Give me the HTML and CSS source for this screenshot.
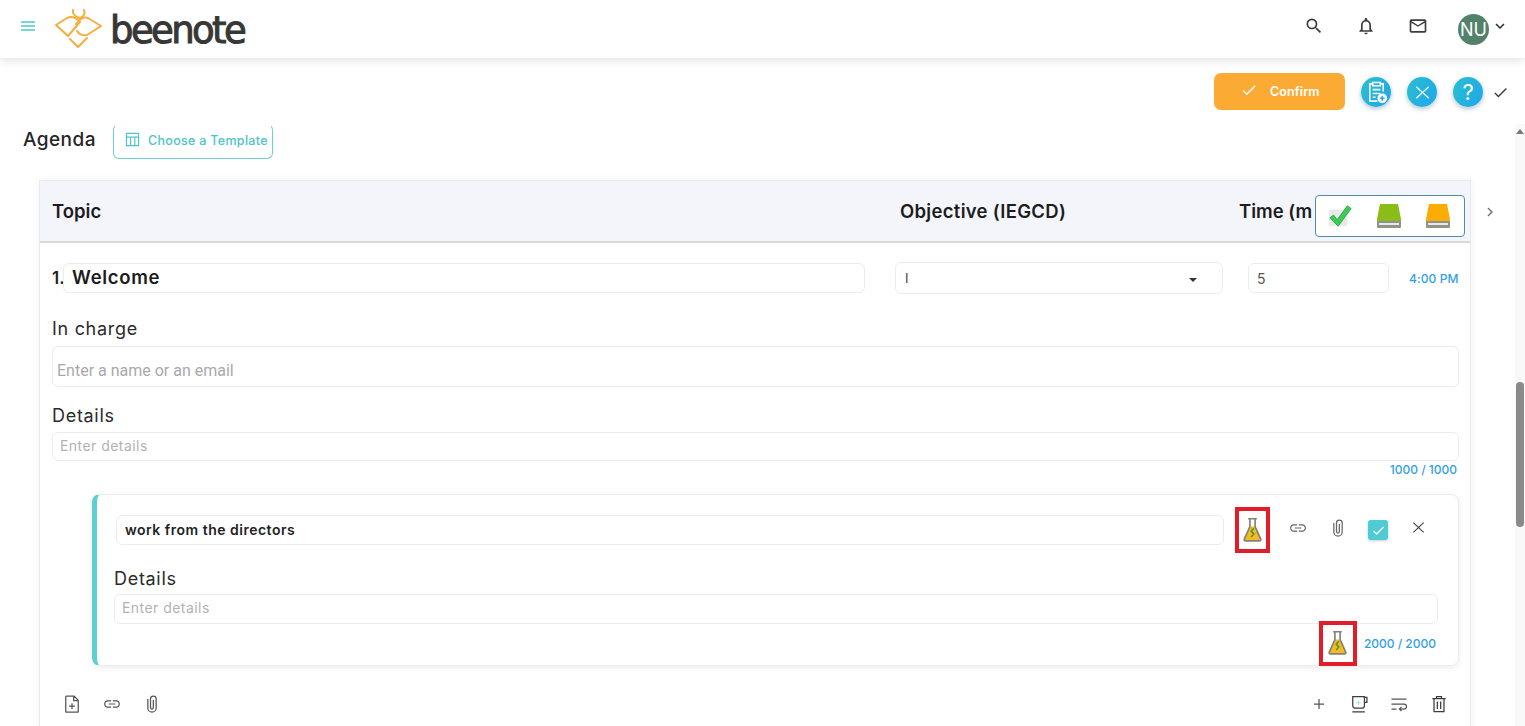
FILE: index.html
```html
<!DOCTYPE html>
<html lang="en">
<head>
<meta charset="utf-8">
<title>Beenote</title>
<link rel="stylesheet" href="styles.css">
</head>
<body>
<svg class="sprite" aria-hidden="true">
  <symbol id="i-link" viewBox="0 0 24 24"><path d="M3.900 12c0-1.710 1.390-3.100 3.100-3.100h4V7.500H7c-2.480 0-4.500 2.020-4.500 4.500s2.020 4.500 4.500 4.500h4v-1.400H7c-1.710 0-3.100-1.390-3.100-3.100zM8 12.700h8v-1.400H8v1.400zm9-5.200h-4v1.400h4c1.710 0 3.100 1.390 3.100 3.100s-1.390 3.100-3.100 3.100h-4v1.400h4c2.480 0 4.500-2.020 4.500-4.500s-2.020-4.500-4.500-4.500z"/></symbol>
  <symbol id="i-clip" viewBox="0 0 24 24"><path d="M7 6.500v10.200a5 5 0 0 0 10 0V6a3.400 3.400 0 0 0-6.800 0v10.300a1.700 1.700 0 0 0 3.400 0V7.500" fill="none" stroke="currentColor" stroke-width="1.500" stroke-linecap="round"/></symbol>
  <symbol id="i-flask" viewBox="0 0 24 30">
    <path d="M9 11L2.500 25.500c-.5 1.200.3 2 1.500 2h16c1.200 0 2-.8 1.500-2L15 11z" fill="#f5b921"/>
    <path d="M7 2h10M9 2v9L2.500 25.500c-.5 1.200.3 2 1.500 2h16c1.200 0 2-.8 1.500-2L15 11V2" fill="none" stroke="#85817a" stroke-width="1.900"/>
    <path d="M13.500 13l-3 3.500 3 3-3 3.500" fill="none" stroke="#3f9a32" stroke-width="1.700"/>
  </symbol>
  <symbol id="i-book" viewBox="0 0 26 26">
    <path d="M4 1h18l3 15v3H1v-3z" fill="currentColor"/>
    <path d="M1 18h24v6a1 1 0 0 1-1 1H2a1 1 0 0 1-1-1z" fill="#8f9488"/>
    <path d="M3 20h20v2H3z" fill="#e8e8e4"/>
  </symbol>
</svg>

<header class="topbar">
  <svg class="menu" viewBox="0 0 14 10"><path d="M0 1h14M0 5h14M0 9h14" stroke="currentColor" stroke-width="1.300"/></svg>
  <svg class="bee" viewBox="0 0 48 42" fill="none" stroke="#f4ae3d" stroke-width="2" stroke-linejoin="round" stroke-linecap="round">
    <path d="M2 18L13 11Q20 8 26 15L14 29z"/>
    <path d="M47 19L34 11Q28 9 22 17M47 19L33 28Q26 29 23 24"/>
    <path d="M16 32L24 40L33 31"/>
    <path d="M19 3Q18 9 26 11Q32 9 30 3"/>
  </svg>
  <span class="wordmark">beenote</span>
  <nav class="top-actions">
    <svg class="top-icon" viewBox="0 0 24 24"><path d="M15.500 14h-.79l-.28-.27A6.471 6.471 0 0 0 16 9.500 6.500 6.500 0 1 0 9.500 16c1.610 0 3.090-.59 4.230-1.570l.27.28v.79l5 4.990L20.490 19l-4.990-5zm-6 0C7.010 14 5 11.990 5 9.500S7.010 5 9.500 5 14 7.010 14 9.500 11.990 14 9.500 14z"/></svg>
    <svg class="top-icon" viewBox="0 0 24 24"><path d="M12 22c1.100 0 2-.9 2-2h-4c0 1.100.9 2 2 2zm6-6v-5c0-3.070-1.630-5.640-4.500-6.320V4c0-.83-.67-1.500-1.500-1.500s-1.500.67-1.500 1.500v.68C7.640 5.360 6 7.920 6 11v5l-2 2v1h16v-1l-2-2zm-2 1H8v-6c0-2.480 1.510-4.500 4-4.500s4 2.020 4 4.500v6z"/></svg>
    <svg class="top-icon" viewBox="0 0 24 24"><path d="M20 4H4c-1.100 0-2 .9-2 2v12c0 1.100.9 2 2 2h16c1.100 0 2-.9 2-2V6c0-1.100-.9-2-2-2zm0 14H4V8l8 5 8-5v10zm-8-7L4 6h16l-8 5z"/></svg>
    <span class="avatar">NU</span>
    <svg class="caret" viewBox="0 0 24 24"><path d="M16.590 8.590L12 13.170 7.410 8.590 6 10l6 6 6-6z"/></svg>
  </nav>
</header>

<section class="actionbar">
  <button class="confirm">
    <svg class="confirm-check" viewBox="0 0 24 24"><path d="M9 16.170L4.830 12l-1.420 1.410L9 19 21 7l-1.410-1.410z"/></svg>
    <span>Confirm</span>
  </button>
  <span class="round">
    <svg class="round-icon" viewBox="0 0 24 24" fill="none" stroke="#fff" stroke-width="1.600"><path d="M8 3H5v18h8M16 3h3v8M8 1.500h8v3.500H8zM8 9h8M8 13h8M8 17h3"/><circle cx="18" cy="18" r="5" fill="#fff" stroke="none"/><path d="M18 15.500v5M15.500 18h5" stroke="#2aa8de"/></svg>
  </span>
  <span class="round">
    <svg class="round-icon" viewBox="0 0 24 24"><path fill="#fff" d="M19 6.410L18.100 5.500 12 11.100 5.900 5.500 5 6.410 11.100 12 5 17.590 5.900 18.500 12 12.900 18.100 18.500 19 17.590 12.900 12z"/></svg>
  </span>
  <span class="round round-q">?</span>
  <svg class="done" viewBox="0 0 24 24"><path d="M9 16.170L4.830 12l-1.420 1.410L9 19 21 7l-1.410-1.410z"/></svg>
</section>

<main class="content">
  <div class="agenda-head">
    <h2 class="agenda-title">Agenda</h2>
    <button class="template">
      <svg class="template-icon" viewBox="0 0 16 16" fill="none" stroke="currentColor" stroke-width="1.200"><path d="M1.500 1.500h13v13h-13zM1.500 5.500h13M6 5.500v9M10.500 5.500v9"/></svg>
      <span>Choose a Template</span>
    </button>
  </div>

  <div class="table-wrap">
    <section class="table">
      <div class="table-head">
        <span class="col-topic">Topic</span>
        <span class="col-objective">Objective (IEGCD)</span>
        <span class="col-time">Time (m</span>
      </div>
      <div class="legend">
        <svg class="legend-check" viewBox="0 0 26 26">
          <path d="M1 6h20v18H1z" fill="#e9e9e9"/>
          <path d="M2 15l4-3 4 5L21 2l4 3-14 19z" fill="#3ccb55" stroke="#2aa845" stroke-width="1"/>
        </svg>
        <svg class="legend-book book-green"><use href="#i-book"/></svg>
        <svg class="legend-book book-orange"><use href="#i-book"/></svg>
      </div>

      <div class="table-body">
        <div class="row-main">
          <span class="row-num">1.</span>
          <div class="field field-title">Welcome</div>
          <div class="field field-select"><span>I</span><i class="arrow"></i></div>
          <div class="field field-time">5</div>
          <span class="time-label">4:00 PM</span>
        </div>

        <label class="label label-charge">In charge</label>
        <div class="field field-charge">Enter a name or an email</div>
        <label class="label label-details">Details</label>
        <div class="field field-details">Enter details</div>
        <div class="counter counter-main">1000 / 1000</div>

        <article class="task">
          <div class="task-row">
            <div class="field field-task">work from the directors</div>
            <span class="redbox redbox-a"><svg class="flask"><use href="#i-flask"/></svg></span>
            <svg class="act act-link"><use href="#i-link"/></svg>
            <svg class="act act-clip"><use href="#i-clip"/></svg>
            <span class="tick"><svg viewBox="0 0 24 24"><path fill="#fff" d="M9 16.170L4.830 12l-1.420 1.410L9 19 21 7l-1.410-1.410z"/></svg></span>
            <svg class="act act-close" viewBox="0 0 24 24"><path d="M19 6.410L18.100 5.500 12 11.100 5.900 5.500 5 6.410 11.100 12 5 17.590 5.900 18.500 12 12.900 18.100 18.500 19 17.590 12.900 12z"/></svg>
          </div>
          <label class="label label-task">Details</label>
          <div class="field field-task-details">Enter details</div>
          <div class="task-foot">
            <span class="redbox redbox-b"><svg class="flask"><use href="#i-flask"/></svg></span>
            <span class="counter">2000 / 2000</span>
          </div>
        </article>

        <div class="tools">
          <div class="tools-group">
            <svg class="tool tool-line" viewBox="0 0 24 24"><path d="M5.500 2.500h9L19.500 7.500V21a.8.8 0 0 1-.8.800H5.300a.8.800 0 0 1-.8-.8V3.300a.8.800 0 0 1 1-.8zM14 2.500V8h5.500M12 11v7M8.500 14.500h7"/></svg>
            <svg class="tool"><use href="#i-link"/></svg>
            <svg class="tool"><use href="#i-clip"/></svg>
          </div>
          <div class="tools-group">
            <svg class="tool tool-line" viewBox="0 0 24 24"><path d="M12 6v12M6 12h12"/></svg>
            <svg class="tool tool-line tool-dark" viewBox="0 0 24 24"><path d="M4.500 3h14v11a3 3 0 0 1-3 3h-8a3 3 0 0 1-3-3zM18.500 4h3v6h-3M4 21.500h15"/><path class="cup-plus" d="M11.500 8v5M9 10.500h5"/></svg>
            <svg class="tool tool-line" viewBox="0 0 24 24"><path d="M3 6h18M3 12h15a3 3 0 0 1 0 6h-5M15 15.500L12.500 18l2.500 2.500M3 18h6"/></svg>
            <svg class="tool tool-line tool-dark" viewBox="0 0 24 24"><path d="M4 5.500h16M9 5.500V3h6v2.500M6 5.500V21h12V5.500M10 9v9M14 9v9"/></svg>
          </div>
        </div>
      </div>
    </section>
    <svg class="next" viewBox="0 0 24 24"><path d="M8.590 16.590L13.170 12 8.590 7.410 10 6l6 6-6 6z"/></svg>
  </div>
</main>

<div class="scrollbar"><i class="scroll-up"></i><i class="scroll-thumb"></i></div>
</body>
</html>
```

FILE: styles.css
```css
* { box-sizing: border-box; }
html, body { height: 726px; }
body {
  margin: 0;
  overflow: hidden;
  background: #fff;
  color: #1f1f1f;
  font-family: "Inter", "Open Sans", sans-serif;
  position: relative;
}
.sprite { display: none; }
h2 { margin: 0; }
button { font-family: inherit; cursor: pointer; }

/* Top bar */
.topbar {
  height: 58px;
  display: flex;
  align-items: center;
  background: #fff;
  box-shadow: 0 2px 10px rgba(0, 0, 0, .13);
  padding-left: 21px;
  position: relative;
}
.menu { width: 14px; height: 10px; color: #4fc8cd; margin-top: -7px; flex: none; }
.bee { width: 48px; height: 42px; margin: -3px 0 0 19px; flex: none; }
.wordmark {
  margin: 2px 0 0 8px;
  font-family: "DejaVu Sans", sans-serif;
  font-size: 37px;
  font-weight: 400;
  letter-spacing: -2.600px;
  color: #373737;
  -webkit-text-stroke: 1px #373737;
  line-height: 1;
}
.top-actions {
  margin-left: auto;
  display: flex;
  align-items: center;
  padding-right: 16px;
  margin-top: -6px;
}
.top-icon { width: 20px; height: 20px; margin-left: 32px; fill: #3d3d3d; }
.avatar {
  width: 31px;
  height: 31px;
  margin: 6px 0 0 30px;
  border-radius: 50%;
  background: #53826a;
  color: #fff;
  font-size: 18px;
  display: flex;
  align-items: center;
  justify-content: center;
}
.caret { width: 18px; height: 18px; margin-left: 2px; fill: #2c2c2c; }

/* Action bar */
.actionbar {
  height: 66px;
  display: flex;
  align-items: flex-start;
  padding: 15px 16px 0 0;
  justify-content: flex-end;
}
.confirm {
  width: 131px;
  height: 37px;
  border: 0;
  border-radius: 7px;
  background: #fbab33;
  color: #fff;
  font-size: 12.500px;
  font-weight: 600;
  letter-spacing: .1px;
  display: flex;
  align-items: center;
  padding: 0 0 0 26px;
}
.confirm-check { width: 18px; height: 18px; fill: #fff; margin: -3px 12px 0 0; }
.round {
  width: 30px;
  height: 30px;
  margin: 4px 0 0 16px;
  border-radius: 50%;
  background: linear-gradient(120deg, #2bbfcf, #1ea6ec);
  box-shadow: 0 2px 5px rgba(0, 60, 90, .3);
  display: flex;
  align-items: center;
  justify-content: center;
  color: #fff;
}
.round-icon { width: 23px; height: 23px; }
.round-q { font-size: 22px; font-weight: 400; }
.done { width: 17px; height: 17px; margin: 11px 0 0 9px; fill: #3d3d3d; }

/* Content */
.agenda-head {
  display: flex;
  align-items: flex-start;
  padding-left: 23px;
  height: 56px;
}
.agenda-title {
  font-size: 19px;
  font-weight: 500;
  line-height: 32px;
  letter-spacing: .45px;
  color: #252525;
  width: 90px;
}
.template {
  width: 160px;
  height: 35px;
  background: #fff;
  border: 1px solid #71d0d4;
  border-top-color: transparent;
  border-radius: 6px;
  color: #4cc4c9;
  font-size: 12.500px;
  font-weight: 500;
  letter-spacing: .3px;
  display: flex;
  align-items: center;
  gap: 8px;
  padding: 0 0 2px 11px;
}
.template-icon { width: 15px; height: 15px; margin-top: -3px; }

.table-wrap { display: flex; align-items: flex-start; padding-left: 39px; }
.table {
  width: 1432px;
  height: 560px;
  position: relative;
  border: 1px solid #e9eaee;
  border-bottom: 0;
  box-shadow: 0 0 8px rgba(0, 0, 0, .06);
}
.table-head {
  height: 62px;
  background: #f3f5fa;
  border-bottom: 2px solid #d9d9dc;
  display: flex;
  align-items: center;
  font-size: 18.500px;
  font-weight: 600;
  color: #1c1c1c;
  white-space: nowrap;
  overflow: hidden;
}
.col-topic { width: 848px; margin-left: 12px; }
.col-objective { width: 339px; letter-spacing: .3px; }
.next { width: 18px; height: 18px; margin: 23px 0 0 10px; fill: #777; }

.legend {
  position: absolute;
  top: 14px;
  left: 1275px;
  width: 150px;
  height: 42px;
  background: #fff;
  border: 1px solid #4f8db0;
  border-radius: 4px;
  display: flex;
  align-items: center;
  gap: 23.500px;
  padding-left: 12px;
}
.legend-check { width: 24px; height: 26px; }
.legend-book { width: 26px; height: 26px; }
.book-green { color: #8bbd18; }
.book-orange { color: #fcad05; }

.table-body { padding: 19px 11px 0 12px; }
.field {
  border: 1px solid #ececec;
  border-radius: 6px;
  background: #fff;
  display: flex;
  align-items: center;
}
.row-main { display: flex; align-items: center; height: 32px; }
.row-num { width: 11px; font-size: 17px; font-weight: 600; }
.field-title {
  width: 802px;
  height: 30px;
  padding: 0 0 2px 8px;
  font-size: 18.500px;
  font-weight: 600;
  letter-spacing: .7px;
  color: #1c1c1c;
}
.field-select {
  width: 328px;
  height: 32px;
  margin-left: 30px;
  padding: 0 25px 0 9px;
  justify-content: space-between;
  font-size: 13px;
  color: #444;
}
.arrow {
  margin-top: 4px;
  border: 4px solid transparent;
  border-top: 4.500px solid #333;
  border-bottom: 0;
}
.field-time {
  width: 141px;
  height: 30px;
  margin-left: 25px;
  padding-left: 8px;
  font-size: 14px;
  color: #555;
}
.time-label {
  margin-left: 20px;
  font-size: 12px;
  font-weight: 500;
  letter-spacing: .1px;
  color: #2f9fe6;
  white-space: nowrap;
}
.label { display: block; font-size: 18px; line-height: 22px; color: #2a2a2a; letter-spacing: .7px; }
.label-charge { margin-top: 24px; }
.field-charge {
  height: 41px;
  margin-top: 6px;
  padding: 8px 0 0 4px;
  font-family: "Roboto", sans-serif;
  font-size: 16px;
  color: #a9a9ad;
}
.label-details { margin-top: 18px; }
.field-details {
  height: 29px;
  margin-top: 5px;
  padding: 0 0 2px 7px;
  font-size: 14px;
  letter-spacing: .45px;
  color: #b2b2b6;
}
.counter {
  font-size: 12px;
  font-weight: 500;
  color: #2f9fe6;
  white-space: nowrap;
}
.counter-main { text-align: right; padding-right: 2px; line-height: 18px; }

.task {
  margin: 15px 0 0 40px;
  height: 172px;
  border: 1px solid #ececec;
  border-left: 5px solid #5ccfd2;
  border-radius: 8px;
  box-shadow: 0 2px 6px rgba(0, 0, 0, .08);
  padding: 20px 20px 0 17px;
}
.task-row { display: flex; align-items: center; height: 30px; margin-left: 2px; }
.field-task {
  width: 1108px;
  height: 30px;
  padding: 0 0 2px 8px;
  font-size: 14px;
  font-weight: 600;
  letter-spacing: .5px;
  color: #222;
}
.redbox {
  background: #fff;
  border: 4px solid #e11d2a;
  display: flex;
  align-items: center;
  justify-content: center;
  flex: none;
}
.redbox-a { width: 35px; height: 46px; margin-left: 11px; }
.redbox-b { width: 38px; height: 45px; position: relative; }
.flask { width: 21px; height: 26px; }
.act { width: 20px; height: 20px; margin-top: -5px; color: #666; fill: #666; flex: none; }
.act-link { margin-left: 18px; }
.act-clip { margin-left: 20px; }
.act-close { margin-left: 21px; width: 19px; height: 19px; fill: #3c3c3c; }
.tick {
  width: 20px;
  height: 20px;
  margin-left: 20px;
  border-radius: 3px;
  background: #4fcbd3;
  box-shadow: 0 1px 3px rgba(0, 0, 0, .2);
  display: flex;
  align-items: center;
  justify-content: center;
}
.tick svg { width: 15px; height: 15px; }
.label-task { margin-top: 23px; }
.field-task-details {
  height: 30px;
  margin-top: 4px;
  padding: 0 0 3px 7px;
  font-size: 14px;
  letter-spacing: .45px;
  color: #b2b2b6;
}
.task-foot {
  display: flex;
  align-items: center;
  justify-content: flex-end;
  gap: 7px;
  height: 20px;
  margin-top: 9px;
  padding-right: 2px;
}

.tools { display: flex; justify-content: space-between; margin-top: 28px; padding: 0 10px; }
.tools-group { display: flex; gap: 20px; }
.tool { width: 20px; height: 20px; color: #555; fill: #555; }
.tool-line { fill: none; stroke: currentColor; stroke-width: 1.500; }
.tool-dark { color: #3d3d3d; }
.cup-plus { stroke: #9fdfe2; stroke-width: 1.200; }

/* Scrollbar */
.scrollbar {
  position: absolute;
  top: 124px;
  right: 0;
  bottom: 0;
  width: 10px;
  background: #f9f9f9;
}
.scroll-up {
  position: absolute;
  top: 5px;
  left: 1px;
  border: 4px solid transparent;
  border-bottom: 5px solid #777;
  border-top: 0;
}
.scroll-thumb {
  position: absolute;
  top: 258px;
  left: 1px;
  width: 8px;
  height: 145px;
  border-radius: 4px;
  background: #8a8a8a;
}
```
